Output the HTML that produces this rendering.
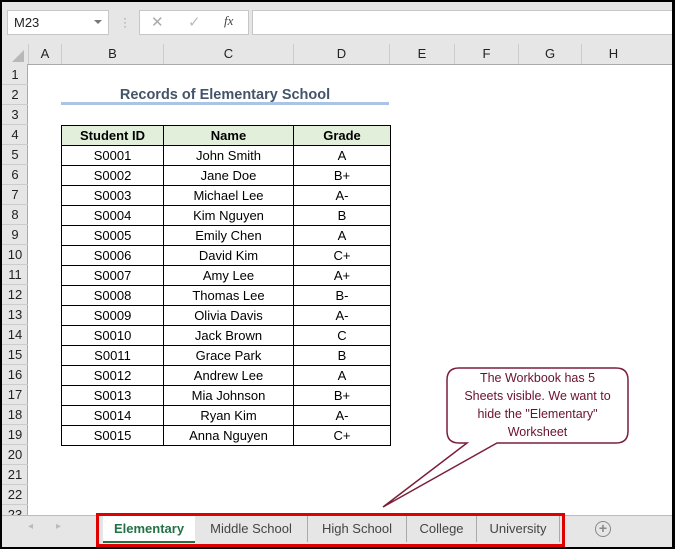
<!DOCTYPE html>
<html><head><meta charset="utf-8"><style>
*{margin:0;padding:0;box-sizing:border-box}
body{width:675px;height:549px;overflow:hidden;background:#000;font-family:"Liberation Sans",sans-serif;position:relative}
.a{position:absolute}
#win{left:2px;top:2px;width:670px;height:545px;background:#e6e6e6;overflow:hidden}
.hdr{font-size:13px;color:#222;text-align:center;line-height:20px}
table{border-collapse:collapse;position:absolute;left:59px;top:123px}
td{border:1px solid #000;height:20px;font-size:13px;text-align:center;padding:0;line-height:18px}
</style></head><body>
<div id="win" class="a">
 <div class="a" style="left:5px;top:8px;width:102px;height:25px;background:#fff;border:1px solid #c6c6c6;font-size:13px;line-height:23px;padding-left:6px;color:#222">M23</div>
 <div class="a" style="left:92px;top:18px;width:0;height:0;border-left:4px solid transparent;border-right:4px solid transparent;border-top:4px solid #777"></div>
 <div class="a" style="left:121px;top:14px;color:#999;font-size:12px;line-height:4px">·<br>·<br>·</div>
 <div class="a" style="left:137px;top:8px;width:110px;height:25px;background:#fff;border:1px solid #c6c6c6"></div>
 <div class="a" style="left:149px;top:11px;color:#aaa;font-size:15px">✕</div>
 <div class="a" style="left:186px;top:11px;color:#bbb;font-size:15px">✓</div>
 <div class="a" style="left:222px;top:11px;color:#444;font-size:13px;font-style:italic;font-family:'Liberation Serif',serif">fx</div>
 <div class="a" style="left:250px;top:8px;width:425px;height:25px;background:#fff;border:1px solid #c6c6c6"></div>
 <div class="a" style="left:0;top:42px;width:672px;height:471px;background:#fff"></div>
 <div class="a" style="left:0;top:42px;width:672px;height:21px;background:#e6e6e6;border-bottom:1px solid #aaa"></div>
 <div class="a" style="left:0;top:62px;width:26px;height:451px;background:#e6e6e6;border-right:1px solid #aaa"></div>
 <div class="a" style="left:10px;top:48px;width:0;height:0;border-left:12px solid transparent;border-bottom:12px solid #b8b8b8"></div>
 <div class="a hdr" style="left:26px;top:42px;width:33px;border-left:1px solid #ccc">A</div>
 <div class="a hdr" style="left:59px;top:42px;width:102px;border-left:1px solid #ccc">B</div>
 <div class="a hdr" style="left:161px;top:42px;width:130px;border-left:1px solid #ccc">C</div>
 <div class="a hdr" style="left:291px;top:42px;width:96px;border-left:1px solid #ccc">D</div>
 <div class="a hdr" style="left:387px;top:42px;width:65px;border-left:1px solid #ccc">E</div>
 <div class="a hdr" style="left:452px;top:42px;width:64px;border-left:1px solid #ccc">F</div>
 <div class="a hdr" style="left:516px;top:42px;width:63px;border-left:1px solid #ccc">G</div>
 <div class="a hdr" style="left:579px;top:42px;width:64px;border-left:1px solid #ccc">H</div>
 <div class="a hdr" style="left:643px;top:42px;width:30px;border-left:1px solid #ccc"></div>
 <div id="rows"></div>
 <div class="a" style="left:59px;top:82px;width:328px;text-align:center;font-weight:bold;font-size:14.5px;color:#44546a;line-height:22px">Records of Elementary School</div>
 <div class="a" style="left:59px;top:100px;width:328px;height:3px;background:#a9c4e4"></div>
 <table>
  <tr style="background:#e2efda"><td style="width:102px;font-weight:bold">Student ID</td><td style="width:130px;font-weight:bold">Name</td><td style="width:97px;font-weight:bold">Grade</td></tr>
  <tr><td>S0001</td><td>John Smith</td><td>A</td></tr>
  <tr><td>S0002</td><td>Jane Doe</td><td>B+</td></tr>
  <tr><td>S0003</td><td>Michael Lee</td><td>A-</td></tr>
  <tr><td>S0004</td><td>Kim Nguyen</td><td>B</td></tr>
  <tr><td>S0005</td><td>Emily Chen</td><td>A</td></tr>
  <tr><td>S0006</td><td>David Kim</td><td>C+</td></tr>
  <tr><td>S0007</td><td>Amy Lee</td><td>A+</td></tr>
  <tr><td>S0008</td><td>Thomas Lee</td><td>B-</td></tr>
  <tr><td>S0009</td><td>Olivia Davis</td><td>A-</td></tr>
  <tr><td>S0010</td><td>Jack Brown</td><td>C</td></tr>
  <tr><td>S0011</td><td>Grace Park</td><td>B</td></tr>
  <tr><td>S0012</td><td>Andrew Lee</td><td>A</td></tr>
  <tr><td>S0013</td><td>Mia Johnson</td><td>B+</td></tr>
  <tr><td>S0014</td><td>Ryan Kim</td><td>A-</td></tr>
  <tr><td>S0015</td><td>Anna Nguyen</td><td>C+</td></tr>
 </table>
 <svg class="a" style="left:-2px;top:-2px" width="672" height="549">
  <path d="M459,368 H616 Q628,368 628,380 V431 Q628,443 616,443 H497 L383,507 L467,443 H459 Q447,443 447,431 V380 Q447,368 459,368 Z" fill="#fff" stroke="#7b1f3a" stroke-width="1.5"/>
 </svg>
 <div class="a" style="left:445px;top:367px;width:181px;text-align:center;color:#6b1030;font-size:12.5px;line-height:18px">The Workbook has 5<br>Sheets visible. We want to<br>hide the "Elementary"<br>Worksheet</div>
 <div class="a" style="left:0;top:513px;width:672px;height:34px;background:#e6e6e6;border-top:1px solid #bbb"></div>
 <div class="a" style="left:26px;top:519px;color:#bbb;font-size:10px">◂</div>
 <div class="a" style="left:54px;top:519px;color:#bbb;font-size:10px">▸</div>
 <div class="a" style="left:101px;top:514px;width:92px;height:27px;background:#fff;border-bottom:2px solid #217346;color:#217346;font-weight:bold;font-size:13px;text-align:center;line-height:26px">Elementary</div>
 <div class="a" style="left:193px;top:514px;width:112px;font-size:13px;color:#444;text-align:center;line-height:26px">Middle School</div>
 <div class="a" style="left:305px;top:514px;width:99px;font-size:13px;color:#444;text-align:center;line-height:26px;border-left:1px solid #aaa">High School</div>
 <div class="a" style="left:404px;top:514px;width:70px;font-size:13px;color:#444;text-align:center;line-height:26px;border-left:1px solid #aaa">College</div>
 <div class="a" style="left:474px;top:514px;width:84px;font-size:13px;color:#444;text-align:center;line-height:26px;border-left:1px solid #aaa;border-right:1px solid #aaa">University</div>
 <div class="a" style="left:94px;top:511px;width:469px;height:34px;border:3px solid #e00000"></div>
 <div class="a" style="left:593px;top:519px;width:16px;height:16px;border:1.5px solid #888;border-radius:50%;color:#888;font-size:14px;line-height:12px;text-align:center;font-weight:bold">+</div>
</div>
<script>
var r=document.getElementById('rows'),h='';
for(var i=1;i<=23;i++){var t=63+20*(i-1);
h+='<div class="a" style="left:0;top:'+t+'px;width:26px;height:20px;border-bottom:1px solid #ccc;font-size:13px;line-height:20px;text-align:center;color:#222">'+i+'</div>';}
r.innerHTML=h;
</script>
</body></html>
